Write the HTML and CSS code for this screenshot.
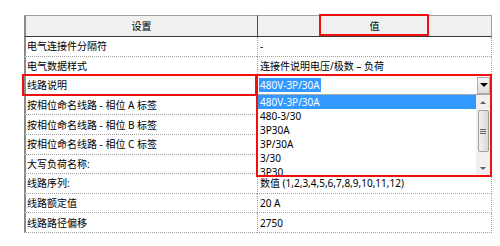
FILE: index.html
```html
<!DOCTYPE html>
<html lang="zh">
<head>
    <meta charset="utf-8">
    <title>线路设置</title>
    <link rel="stylesheet" href="styles.css">
</head>
<body>
    <div class="sheet">
        <div class="hd">设置</div>
        <div class="hd val-hd">值<span class="mark"></span></div>

        <div class="key">电气连接件分隔符</div>
        <div class="val">-</div>

        <div class="key">电气数据样式</div>
        <div class="val">连接件说明电压/极数 – 负荷</div>

        <div class="key marked">线路说明</div>
        <div class="val">
            <div class="combo">
                <div class="field"><span class="sel">480V-3P/30A</span><span class="drop"></span></div>
                <div class="list">
                    <div class="items">
                        <div class="item on">480V-3P/30A</div>
                        <div class="item">480-3/30</div>
                        <div class="item">3P30A</div>
                        <div class="item">3P/30A</div>
                        <div class="item">3/30</div>
                        <div class="item">3P30</div>
                    </div>
                    <div class="scroll">
                        <div class="arrow up"></div>
                        <div class="thumb"><i></i></div>
                        <div class="arrow down"></div>
                    </div>
                </div>
            </div>
        </div>

        <div class="key">按相位命名线路 - 相位 A 标签</div>
        <div class="val"></div>

        <div class="key">按相位命名线路 - 相位 B 标签</div>
        <div class="val"></div>

        <div class="key">按相位命名线路 - 相位 C 标签</div>
        <div class="val"></div>

        <div class="key">大写负荷名称:</div>
        <div class="val"></div>

        <div class="key">线路序列:</div>
        <div class="val">数值 (1,2,3,4,5,6,7,8,9,10,11,12)</div>

        <div class="key">线路额定值</div>
        <div class="val">20 A</div>

        <div class="key">线路路径偏移</div>
        <div class="val">2750</div>
    </div>
</body>
</html>
```

FILE: styles.css
```css
* { margin:0; padding:0; box-sizing:border-box }
body { background:#fff; color:#000; font:10px/1 "Noto Sans", "Noto Sans CJK SC", sans-serif }

/* 属性表 */
.sheet { display:grid; grid-template-columns:233px 235px; grid-template-rows:22px; grid-auto-rows:19.6px; width:468px; margin:15px 0 0 24px }
.hd { display:flex; align-items:center; justify-content:center; background:#f0f0f0; border-top:1px solid #a0a0a0; border-bottom:1px solid #3a3a3a }
.hd:first-child { border-left:2px solid #8a8a8a }
.val-hd { position:relative; border-left:1px solid #4a4a4a; border-right:1px solid #a0a0a0 }
.key, .val { position:relative; display:flex; align-items:center; white-space:nowrap; border-bottom:1px dotted #a0a0a0 }
.key { border-left:2px solid #8a8a8a; padding-left:1px }
.val { border-left:1px dotted #a0a0a0; border-right:1px dotted #a0a0a0; padding-left:2px }

/* 红色标记框 */
.mark { position:absolute; left:61px; top:-2px; width:110px; height:22px; border:2px solid #f01010 }
.marked::after { content:""; position:absolute; left:-4px; right:0; top:-2px; bottom:-1px; border:2px solid #f01010 }

/* 下拉框 */
.combo { position:absolute; left:-2px; right:-1px; top:-2px; height:103px; z-index:5; background:#fff; border:2px solid #f01010 }
.field { display:flex; align-items:center; height:18px }
.sel { margin-left:1px; padding:0 1px; line-height:14px; background:#3399ff; color:#fff }
.drop { display:flex; align-items:center; justify-content:center; width:13px; height:17px; margin-left:auto; border:1px solid #acacac; background:linear-gradient(#f6f6f6,#dcdcdc) }
.drop::before { content:""; border-left:4px solid transparent; border-right:4px solid transparent; border-top:4px solid #000 }
.list { display:flex; height:81px; border-top:1px solid #a8a8a8 }
.items { flex:1; overflow:hidden }
.item { height:14px; line-height:14px; padding-left:2px; white-space:nowrap }
.item.on { background:#3399ff; color:#fff }

/* 滚动条 */
.scroll { display:flex; flex-direction:column; align-items:center; width:14px; background:#f0f0f0 }
.arrow { display:flex; align-items:center; justify-content:center; width:100%; height:14px }
.arrow.up::before { content:""; border-left:3px solid transparent; border-right:3px solid transparent; border-bottom:3px solid #606060 }
.arrow.down { margin-top:auto }
.arrow.down::before { content:""; border-left:3px solid transparent; border-right:3px solid transparent; border-top:3px solid #606060 }
.thumb { display:flex; align-items:center; justify-content:center; width:11px; height:42px; margin-top:1px; border:1px solid #a0a0a0; border-radius:2px; background:linear-gradient(90deg,#f2f2f2,#d8d8d8) }
.thumb i { width:6px; height:5px; background:repeating-linear-gradient(#666 0 1px, transparent 1px 2px) }
```
